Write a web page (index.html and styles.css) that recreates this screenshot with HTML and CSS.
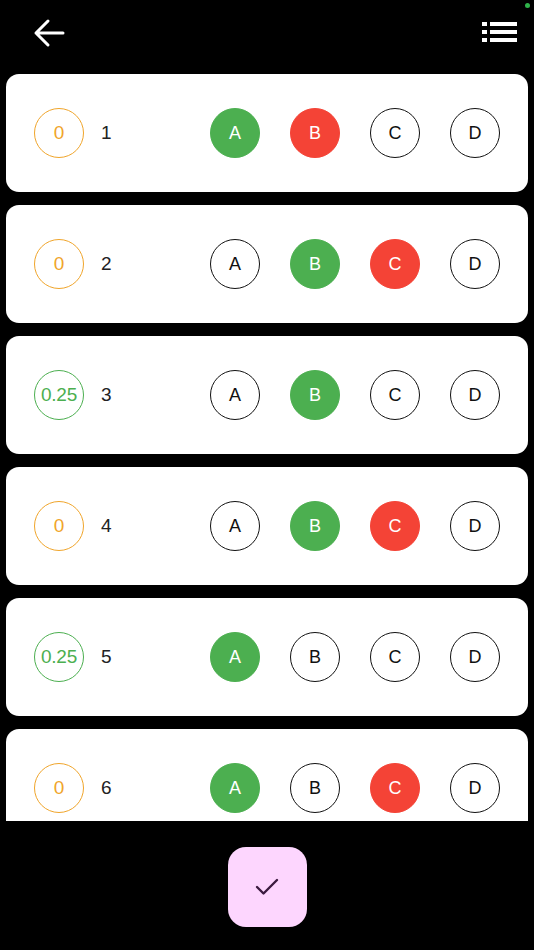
FILE: index.html
```html
<!DOCTYPE html>
<html lang="en">
<head>
  <meta charset="UTF-8">
  <meta name="viewport" content="width=device-width, initial-scale=1.0">
  <link rel="stylesheet" href="styles.css">
  <title>Answers</title>
</head>
<body>
  <div class="status-dot"></div>

  <header class="topbar">
    <button class="icon-btn back">
      <svg width="32" height="30" viewBox="0 0 32 30">
        <path d="M30 15H3M15 3L3 15l12 12" fill="none" stroke="#fff" stroke-width="3" stroke-linecap="round" stroke-linejoin="round"/>
      </svg>
    </button>
    <button class="icon-btn menu">
      <svg width="36" height="22" viewBox="0 0 36 22">
        <rect x="0" y="0" width="5" height="4" fill="#fff"/>
        <rect x="8" y="0" width="27" height="4" fill="#fff"/>
        <rect x="0" y="8" width="5" height="4" fill="#fff"/>
        <rect x="8" y="8" width="27" height="4" fill="#fff"/>
        <rect x="0" y="16" width="5" height="4" fill="#fff"/>
        <rect x="8" y="16" width="27" height="4" fill="#fff"/>
      </svg>
    </button>
  </header>

  <main class="list">
    <div class="card">
      <div class="score zero">0</div>
      <div class="num">1</div>
      <div class="options">
        <div class="opt right">A</div>
        <div class="opt wrong">B</div>
        <div class="opt">C</div>
        <div class="opt">D</div>
      </div>
    </div>

    <div class="card">
      <div class="score zero">0</div>
      <div class="num">2</div>
      <div class="options">
        <div class="opt">A</div>
        <div class="opt right">B</div>
        <div class="opt wrong">C</div>
        <div class="opt">D</div>
      </div>
    </div>

    <div class="card">
      <div class="score plus">0.25</div>
      <div class="num">3</div>
      <div class="options">
        <div class="opt">A</div>
        <div class="opt right">B</div>
        <div class="opt">C</div>
        <div class="opt">D</div>
      </div>
    </div>

    <div class="card">
      <div class="score zero">0</div>
      <div class="num">4</div>
      <div class="options">
        <div class="opt">A</div>
        <div class="opt right">B</div>
        <div class="opt wrong">C</div>
        <div class="opt">D</div>
      </div>
    </div>

    <div class="card">
      <div class="score plus">0.25</div>
      <div class="num">5</div>
      <div class="options">
        <div class="opt right">A</div>
        <div class="opt">B</div>
        <div class="opt">C</div>
        <div class="opt">D</div>
      </div>
    </div>

    <div class="card">
      <div class="score zero">0</div>
      <div class="num">6</div>
      <div class="options">
        <div class="opt right">A</div>
        <div class="opt">B</div>
        <div class="opt wrong">C</div>
        <div class="opt">D</div>
      </div>
    </div>
  </main>

  <footer class="bottom">
    <button class="done">
      <svg width="24" height="18" viewBox="0 0 24 18">
        <path d="M2 9l6.5 6.5L22 2" fill="none" stroke="#3b1a3f" stroke-width="2.4" stroke-linecap="round" stroke-linejoin="round"/>
      </svg>
    </button>
  </footer>
</body>
</html>
```

FILE: styles.css
```css
body {
  margin: 0;
  padding: 0;
  background: #000;
  font-family: 'Liberation Sans', Arial, sans-serif;
  color: #222;
  height: 950px;
  overflow: hidden;
  display: flex;
  flex-direction: column;
}
.status-dot {
  position: absolute;
  top: 3px;
  right: 4px;
  width: 5px;
  height: 5px;
  border-radius: 50%;
  background: #2fb34a;
}
.topbar {
  height: 74px;
  display: flex;
  align-items: center;
  justify-content: space-between;
  padding: 0 16px 0 33px;
  box-sizing: border-box;
  flex-shrink: 0;
}
.icon-btn {
  background: none;
  border: none;
  padding: 0;
  display: flex;
  cursor: pointer;
}
.back {
  margin-top: -8px;
}
.menu {
  margin-top: -8px;
}
.list {
  height: 747px;
  overflow: hidden;
  display: flex;
  flex-direction: column;
  gap: 13px;
  padding: 0 6px;
  flex-shrink: 0;
}
.card {
  background: #fff;
  border-radius: 13px;
  height: 118px;
  flex-shrink: 0;
  display: flex;
  align-items: center;
  padding: 0 28px;
}
.score {
  width: 48px;
  height: 48px;
  border-radius: 50%;
  border: 1.5px solid;
  display: flex;
  align-items: center;
  justify-content: center;
  font-size: 19px;
  flex-shrink: 0;
}
.score.zero {
  color: #f0a52b;
  border-color: #f0a52b;
}
.score.plus {
  color: #4caf50;
  border-color: #4caf50;
  font-size: 19px;
  letter-spacing: -0.2px;
}
.num {
  font-size: 19px;
  margin-left: 17px;
  color: #222;
}
.options {
  margin-left: auto;
  display: flex;
  gap: 30px;
}
.opt {
  width: 48px;
  height: 48px;
  border-radius: 50%;
  border: 1.5px solid #111;
  display: flex;
  align-items: center;
  justify-content: center;
  font-size: 18px;
  color: #111;
}
.opt.right {
  background: #4caf50;
  border-color: #4caf50;
  color: #fff;
}
.opt.wrong {
  background: #f44336;
  border-color: #f44336;
  color: #fff;
}
.bottom {
  flex: 1;
  display: flex;
  justify-content: center;
  padding-top: 26px;
}
.done {
  width: 79px;
  height: 80px;
  border-radius: 18px;
  border: none;
  background: #fdd6fe;
  display: flex;
  align-items: center;
  justify-content: center;
  cursor: pointer;
  padding: 0;
}
```
